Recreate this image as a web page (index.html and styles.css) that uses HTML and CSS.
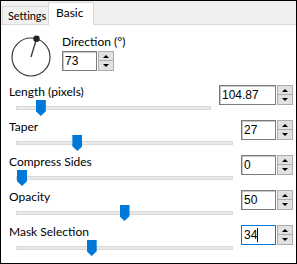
FILE: index.html
```html
<!DOCTYPE html>
<html>
<head>
<meta charset="utf-8">
<link rel="stylesheet" href="styles.css">
</head>
<body>
<div class="window">
  <div class="tabs">
    <div class="tab">Settings</div>
    <div class="tab active">Basic</div>
  </div>
  <div class="panel">
    <div class="dir-row">
      <svg class="dial" width="44" height="44" viewBox="0 0 44 44">
        <circle cx="22" cy="22" r="19" fill="none" stroke="#3a3a3a" stroke-width="1.2"/>
        <line x1="22" y1="22" x2="27.5" y2="3.8" stroke="#3a3a3a" stroke-width="1.3"/>
        <circle cx="27.5" cy="3.8" r="3.2" fill="#222"/>
      </svg>
      <div class="dir-ctrl">
        <div class="label">Direction (°)</div>
        <div class="spin">
          <div class="num">73</div>
          <div class="arrows"><div class="btn"><span class="up"></span></div><div class="btn"><span class="down"></span></div></div>
        </div>
      </div>
    </div>

    <div class="row">
      <div class="left">
        <div class="label">Length (pixels)</div>
        <div class="track"><div class="thumb" style="left: calc((100% - 10px) * 0.103)"></div></div>
      </div>
      <div class="spin">
        <div class="num wide">104.87</div>
        <div class="arrows"><div class="btn"><span class="up"></span></div><div class="btn"><span class="down"></span></div></div>
      </div>
    </div>

    <div class="row">
      <div class="left">
        <div class="label">Taper</div>
        <div class="track"><div class="thumb" style="left: calc((100% - 10px) * 0.27)"></div></div>
      </div>
      <div class="spin">
        <div class="num">27</div>
        <div class="arrows"><div class="btn"><span class="up"></span></div><div class="btn"><span class="down"></span></div></div>
      </div>
    </div>

    <div class="row">
      <div class="left">
        <div class="label">Compress Sides</div>
        <div class="track"><div class="thumb" style="left: calc((100% - 10px) * 0)"></div></div>
      </div>
      <div class="spin">
        <div class="num">0</div>
        <div class="arrows"><div class="btn"><span class="up"></span></div><div class="btn"><span class="down"></span></div></div>
      </div>
    </div>

    <div class="row">
      <div class="left">
        <div class="label">Opacity</div>
        <div class="track"><div class="thumb" style="left: calc((100% - 10px) * 0.5)"></div></div>
      </div>
      <div class="spin">
        <div class="num">50</div>
        <div class="arrows"><div class="btn"><span class="up"></span></div><div class="btn"><span class="down"></span></div></div>
      </div>
    </div>

    <div class="row">
      <div class="left">
        <div class="label">Mask Selection</div>
        <div class="track"><div class="thumb" style="left: calc((100% - 10px) * 0.34)"></div></div>
      </div>
      <div class="spin">
        <div class="num focus">34<span class="caret"></span></div>
        <div class="arrows"><div class="btn"><span class="up"></span></div><div class="btn"><span class="down"></span></div></div>
      </div>
    </div>
  </div>
</div>
</body>
</html>
```

FILE: styles.css
```css
* { box-sizing: border-box; }
html, body { margin: 0; padding: 0; background: #fff; }
body { font-family: "Liberation Sans", Arial, sans-serif; color: #000; }

.window {
  width: 297px;
  height: 264px;
  border: 1px solid #000;
  display: flex;
  flex-direction: column;
  background: #fff;
}

.tabs {
  height: 24px;
  flex: none;
  background: #f0f0f0;
  border-bottom: 1px solid #d9d9d9;
  display: flex;
  align-items: flex-end;
  padding-left: 1px;
}
.tab {
  height: 18px;
  width: 47px;
  border: 1px solid #d9d9d9;
  border-bottom: none;
  background: #f0f0f0;
  font-family: Lato, "Liberation Sans", sans-serif;
  font-size: 11px;
  letter-spacing: -0.1px;
  line-height: 17px;
  padding-left: 5px;
  white-space: nowrap;
  overflow: hidden;
}
.tab.active {
  height: 23px;
  width: 46px;
  margin-bottom: -1px;
  margin-left: -1px;
  background: #fff;
  padding-left: 7px;
  font-size: 12px;
  letter-spacing: 0;
  line-height: 20px;
  position: relative;
}

.panel {
  flex: 1;
  padding: 0 3px 0 8px;
  display: flex;
  flex-direction: column;
}

.dir-row {
  height: 60px;
  display: flex;
  align-items: flex-start;
}
.dial {
  margin-top: 10px;
  display: block;
}
.dir-ctrl {
  margin-left: 9px;
  margin-top: 10px;
}
.dir-ctrl .spin { margin-top: 2px; }

.label {
  font-family: Lato, "Liberation Sans", sans-serif;
  font-size: 12px;
  line-height: 14px;
  height: 14px;
  white-space: nowrap;
}

.row {
  height: 35px;
  display: grid;
  grid-template-columns: 1fr auto;
  column-gap: 8px;
  align-items: start;
}
.left { display: flex; flex-direction: column; }
.track {
  margin-top: 7px;
  margin-left: 7px;
  height: 4px;
  background: #e9e9e9;
  border: 1px solid #d9d9d9;
  position: relative;
}
.thumb {
  position: absolute;
  top: -7px;
  width: 10px;
  height: 16px;
  background: #0078d7;
  clip-path: polygon(0 0, 100% 0, 100% 70%, 50% 100%, 0 70%);
}

.spin {
  display: flex;
  height: 20px;
}
.num {
  width: 35px;
  height: 20px;
  border: 1px solid #7a7a7a;
  box-shadow: inset 1px 1px 0 #c8c8c8;
  background: #fff;
  font-size: 12px;
  line-height: 18px;
  padding-left: 2px;
  display: flex;
  align-items: center;
}
.num.wide { width: 57px; }
.num.focus { border-color: #0078d7; box-shadow: none; }
.caret {
  display: inline-block;
  width: 1px;
  height: 14px;
  background: #000;
}
.arrows {
  width: 16px;
  margin-left: 1px;
  display: flex;
  flex-direction: column;
}
.btn {
  height: 10px;
  background: #e1e1e1;
  border: 1px solid #adadad;
  display: flex;
  align-items: center;
  justify-content: center;
}
.btn + .btn { border-top: none; }
.up {
  width: 0; height: 0;
  border-left: 3px solid transparent;
  border-right: 3px solid transparent;
  border-bottom: 3px solid #000;
}
.down {
  width: 0; height: 0;
  border-left: 3px solid transparent;
  border-right: 3px solid transparent;
  border-top: 3px solid #000;
}
```
